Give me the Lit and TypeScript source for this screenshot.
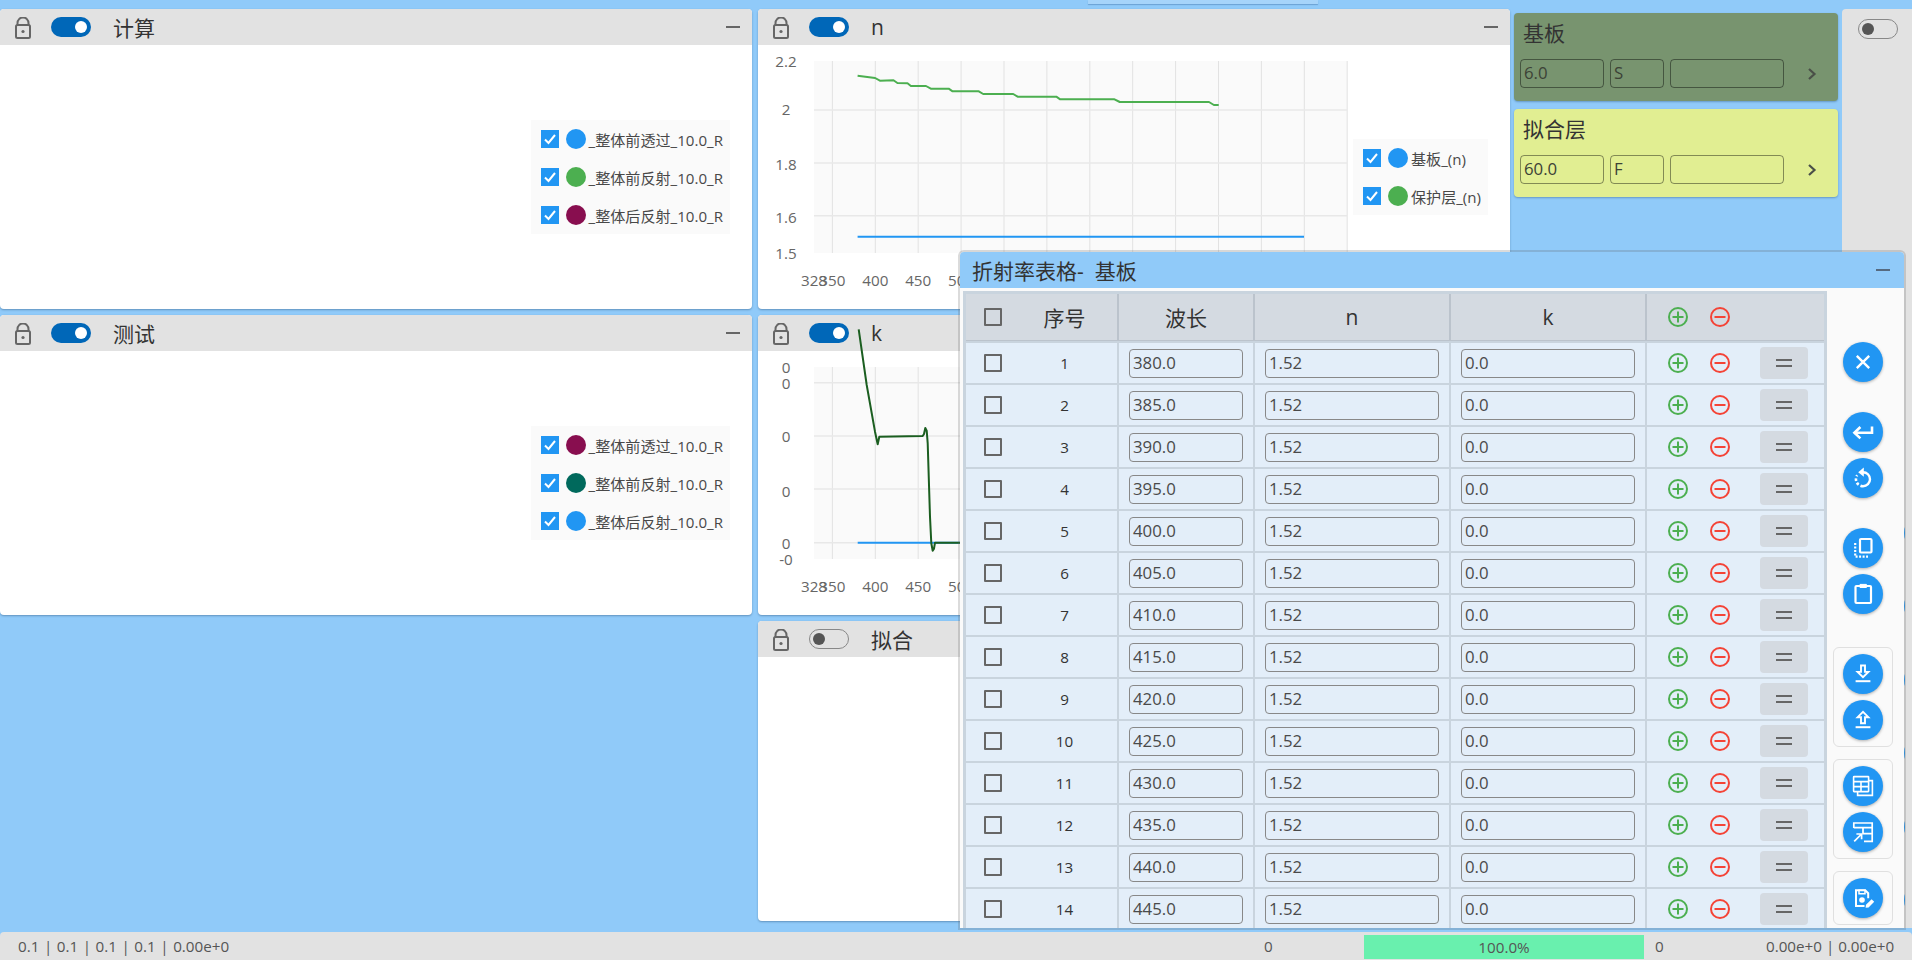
import { LitElement, html, css, svg } from "lit";
import { customElement } from "lit/decorators.js";

const BLUE = "#2196F3", GREEN = "#4CAF50", PLUM = "#880E4F", TEAL = "#00695C", DARKGREEN = "#1B5E20";

const GRID_X = Array.from({ length: 13 }, (_, i) => 74.4 + 42.9 * i);

const N_GREEN: [number, number][] = [
  [222, 227], [258, 234], [268, 242], [296, 241], [304, 249], [325, 250], [332, 258], [363, 258],
  [373, 266], [410, 266], [418, 274], [472, 274], [481, 282], [543, 282], [552, 290], [632, 290],
  [640, 298], [752, 298], [763, 306], [947, 306], [957, 315], [967, 315],
];
const K_GREEN: [number, number][] = [
  [326, 58], [350, 225], [375, 365], [383, 403], [388, 380], [518, 378], [522, 372], [526, 354], [530, 362],
  [533, 400], [540, 620], [544, 700], [548, 722], [552, 716], [555, 698], [1800, 698],
];

function lock() {
  return html`<svg class="lock" viewBox="0 0 18 22" width="18" height="22">
    <path d="M3.5 8V6a5.5 5.5 0 0 1 11 0v2" fill="none" stroke="#666" stroke-width="2"/>
    <rect x="2" y="8" width="14" height="13" rx="1.5" fill="none" stroke="#666" stroke-width="2"/>
    <circle cx="9" cy="14.5" r="1.6" fill="#666"/>
  </svg>`;
}

function chart(
  hs: number[],
  yLabels: [string, number][],
  lines: { pts: [number, number][]; color: string }[],
) {
  const xLabels: [string, number][] = [["328", 56], ["350", 74.4], ["400", 117.3], ["450", 160.2], ["500", 203.1]];
  return html`<svg class="chart" width="752" height="264" viewBox="0 0 752 264">
    <rect x="56" y="16" width="533" height="192" fill="#FAFAFA"/>
    ${GRID_X.map((x) => svg`<line x1=${x} x2=${x} y1="16" y2="208" stroke="#E2E2E2"/>`)}
    ${hs.map((y) => svg`<line x1="56" x2="589" y1=${y} y2=${y} stroke="#E8E8E8" stroke-width="1.4"/>`)}
    ${yLabels.map(([t, y]) => svg`<text class="tick" x="28" y=${y} text-anchor="middle" dominant-baseline="central">${t}</text>`)}
    ${xLabels.map(([t, x]) => svg`<text class="tick" x=${x} y="235" text-anchor="middle" dominant-baseline="central">${t}</text>`)}
    ${lines.map((l) => svg`<polyline points=${l.pts.map((p) => p.join(",")).join(" ")} fill="none" stroke=${l.color} stroke-width="2" stroke-linejoin="round"/>`)}
  </svg>`;
}

function legend(items: [string, string][]) {
  return html`<div class="legend">
    ${items.map(([color, label]) => html`<div class="leg-row">
      <svg class="check" viewBox="0 0 18 18" width="18" height="18"><rect width="18" height="18" fill="#2196F3"/><path d="M4 9.5l3.5 3.5 6.5-8" fill="none" stroke="#fff" stroke-width="2"/></svg>
      <span class="dot" style="background:${color}"></span>
      <span class="leg-text">${label}</span>
    </div>`)}
  </div>`;
}

function card(title: string, on: boolean, body: unknown) {
  return html`<section class="card">
    <header class="card-head">
      ${lock()}
      <span class="toggle ${on ? "on" : "off"}"><i></i></span>
      <span class="card-title">${title}</span>
      <span class="dash"></span>
    </header>
    <div class="card-body">${body}</div>
  </section>`;
}

function layer(name: string, cls: string, a: string, b: string) {
  return html`<div class="layer ${cls}">
    <div class="layer-name">${name}</div>
    <div class="layer-row">
      <div class="lf w84">${a}</div>
      <div class="lf w54">${b}</div>
      <div class="lf w114"></div>
      <svg class="chev" viewBox="0 0 10 14" width="10" height="14"><path d="M2 2l5.5 5L2 12" fill="none" stroke="#4a4f48" stroke-width="2.2"/></svg>
    </div>
  </div>`;
}

const plusIcon = html`<svg viewBox="0 0 20 20" width="20" height="20"><circle cx="10" cy="10" r="9" fill="none" stroke="#4CAF50" stroke-width="2"/><path d="M10 4.5v11M4.5 10h11" stroke="#4CAF50" stroke-width="2"/></svg>`;
const minusIcon = html`<svg viewBox="0 0 20 20" width="20" height="20"><circle cx="10" cy="10" r="9" fill="none" stroke="#F44336" stroke-width="2"/><path d="M4.5 10h11" stroke="#F44336" stroke-width="2"/></svg>`;

const ICONS: Record<string, unknown> = {
  close: svg`<path d="M5.8 5.8l12.4 12.4M18.2 5.8L5.8 18.2" stroke-width="2.4"/>`,
  enter: svg`<path d="M21 6.5v6.3H4" stroke-width="2.6"/><path d="M9.4 7L3.4 12.8 9.4 18.4" stroke-width="2.6"/>`,
  undo: svg`<path d="M12 6.2A7 7 0 1 1 12 20.2" stroke-width="2.4"/><path d="M12 20.2A7 7 0 0 1 6.2 9.2" stroke-width="2.6" stroke-dasharray="2.6 2"/><path d="M12.8 1.4L7.2 6.2l5.6 4.6z" fill="#fff" stroke="none"/>`,
  copy: svg`<rect x="9" y="3" width="11.5" height="13.5" rx="1" stroke-width="2.2"/><path d="M4.2 7v13.6H17" stroke-width="2.2" stroke-dasharray="2 1.5"/>`,
  paste: svg`<rect x="4.5" y="4" width="15.5" height="17" rx="1" stroke-width="2.2"/><path d="M9 5.5V2.4h6.4v3.1z" fill="#fff" stroke="#fff" stroke-width="1"/>`,
  down: svg`<path d="M10 3.5h4v6.4h3.4L12 15.2 6.6 9.9H10z" stroke-width="1.9"/><path d="M4.6 19.2h14.8" stroke-width="2"/>`,
  up: svg`<path d="M10 15.2V9.2H6.6L12 3.8l5.4 5.4H14v6z" stroke-width="1.9"/><path d="M4.6 19.2h14.8" stroke-width="2"/>`,
  table: svg`<g stroke-width="1.6"><rect x="2.6" y="2.6" width="15" height="15" rx=".5"/><path d="M2.6 7.6h15M2.6 12.6h15M10 7.6v10M17.6 6.6h3.8v14.8H6.6v-3.8"/></g>`,
  texport: svg`<g stroke-width="1.7"><path d="M2.8 8V3h18.4v18.4h-8.2M2.8 7.6h18.4M12 7.6v6h9.2"/><path d="M3.2 21.4l7.4-7.4M5.4 14h5.2v5.2"/></g>`,
  saveedit: svg`<path d="M13.5 20H5V4.2h9.2l3 3v5" stroke-width="2"/><path d="M8 4.2h6v3.6H8z" fill="none" stroke-width="1.5"/><circle cx="11" cy="14" r="2.8" fill="#fff" stroke="none"/><path d="M14.6 21.8l.4-3 5.6-5.6 2.6 2.6-5.6 5.6z" fill="#fff" stroke="none"/>`,
};

function fab(name: string) {
  return html`<button class="fab"><svg viewBox="0 0 24 24" width="24" height="24" fill="none" stroke="#fff">${ICONS[name]}</svg></button>`;
}

const ROWS = Array.from({ length: 14 }, (_, i) => ({ no: i + 1, wl: (380 + i * 5).toFixed(1) }));

@customElement("app-root")
export class AppRoot extends LitElement {
  static styles = css`
    :host {
      display: block;
      position: relative;
      width: 1912px;
      height: 960px;
      overflow: hidden;
      background: #90caf9;
      font-family: "Open Sans", "Noto Sans CJK SC", sans-serif;
      color: #444;
    }
    .tab {
      position: absolute;
      left: 1088px;
      top: 0;
      width: 230px;
      height: 4px;
      background: #a6d4fa;
      box-shadow: 0 1px 1px rgba(40, 90, 140, 0.35);
    }
    .main {
      display: flex;
      height: 932px;
      padding: 9px 0 4px;
      box-sizing: border-box;
    }
    .col {
      width: 752px;
      display: flex;
      flex-direction: column;
      gap: 6px;
      margin-right: 6px;
      flex: none;
    }
    .card {
      height: 300px;
      flex: none;
      display: flex;
      flex-direction: column;
      background: #fff;
      border-radius: 4px;
      box-shadow: 0 1px 2px rgba(40, 80, 120, 0.45);
    }
    .card-head {
      height: 36px;
      flex: none;
      display: flex;
      align-items: center;
      background: #e2e2e2;
      border-radius: 4px 4px 0 0;
      padding-left: 14px;
      padding-right: 12px;
    }
    .lock { margin-top: 1px; flex: none; }
    .toggle {
      width: 40px;
      height: 20px;
      margin-left: 19px;
      border-radius: 10px;
      box-sizing: border-box;
      display: flex;
      align-items: center;
      flex: none;
    }
    .toggle.on { background: #0067b8; justify-content: flex-end; padding-right: 4px; }
    .toggle.on i { width: 12px; height: 12px; border-radius: 50%; background: #fff; }
    .toggle.off { border: 1px solid #888; padding-left: 3px; }
    .toggle.off i { width: 12px; height: 12px; border-radius: 50%; background: #555; }
    .card-title {
      margin-left: 22px;
      font-size: 21px;
      color: #333;
      flex: 1;
    }
    .dash { width: 14px; height: 2px; background: #666; flex: none; }
    .card-body {
      position: relative;
      flex: 1;
      display: flex;
      align-items: center;
      justify-content: flex-end;
      padding-right: 22px;
    }
    .chart { position: absolute; left: 0; top: 0; overflow: visible; }
    .tick { font-size: 15.2px; fill: #666; }
    .legend {
      position: relative;
      background: #fafafa;
      padding: 0 7px 0 10px;
      display: flex;
      flex-direction: column;
    }
    .leg-row { height: 38px; display: flex; align-items: center; }
    .check { flex: none; }
    .dot { width: 20px; height: 20px; border-radius: 50%; margin-left: 7px; margin-right: 3px; flex: none; }
    .leg-text { font-size: 15.1px; color: #484848; white-space: nowrap; }
    .layers {
      width: 324px;
      margin-left: -2px;
      padding-top: 4px;
      display: flex;
      flex-direction: column;
      gap: 8px;
      flex: none;
    }
    .layer {
      height: 88px;
      border-radius: 4px;
      box-sizing: border-box;
      padding: 0 6px;
      box-shadow: 0 1px 2px rgba(40, 80, 120, 0.4);
      color: #333;
    }
    .layer.s { background: #78946f; }
    .layer.f { background: #e1ee92; }
    .layer-name { height: 46px; line-height: 40px; padding-left: 3px; font-size: 21px; }
    .layer-row { display: flex; gap: 6px; align-items: center; }
    .lf {
      height: 29px;
      box-sizing: border-box;
      border: 1px solid rgba(0, 0, 0, 0.42);
      border-radius: 4px;
      font-size: 16.8px;
      line-height: 26px;
      padding-left: 3px;
      color: #3c4236;
    }
    .w84 { width: 84px; }
    .w54 { width: 54px; }
    .w114 { width: 114px; }
    .chev { margin-left: 17px; }
    .right {
      width: 70px;
      margin-left: 4px;
      flex: none;
      background: #e2e2e2;
      border-radius: 4px 0 0 0;
      box-sizing: border-box;
      padding: 10px 0 0 16px;
    }
    .right .toggle { margin-left: 0; }
    .peek { display: flex; flex-direction: column; gap: 33.4px; margin-top: 474px; margin-left: 7px; }
    .peek span { width: 40px; height: 40px; border-radius: 50%; background: #2196f3; display: block; }
    .status {
      position: relative;
      height: 28px;
      background: #e2e2e2;
      border-radius: 4px 4px 0 0;
      display: flex;
      align-items: center;
      font-size: 15.2px;
      color: #555;
      padding-left: 18px;
    }
    .st-left { width: 1246px; word-spacing: 0.6px; }
    .st-mid { width: 100px; }
    .st-bar {
      width: 280px;
      height: 24px;
      margin-top: 2px;
      background: #69f0ae;
      text-align: center;
      line-height: 24px;
    }
    .st-zero { width: 122px; padding-left: 11px; box-sizing: border-box; }
    .dialog {
      position: absolute;
      left: 960px;
      top: 252px;
      width: 944px;
      height: 676px;
      background: #fafafa;
      border-radius: 4px 4px 0 0;
      box-shadow: 0 0 0 2px rgba(90, 90, 90, 0.22);
      display: flex;
      flex-direction: column;
      overflow: hidden;
    }
    .d-head {
      height: 36px;
      flex: none;
      background: #90caf9;
      display: flex;
      align-items: center;
      padding: 0 14px 0 12px;
    }
    .d-title { flex: 1; font-size: 21px; color: #333; white-space: pre; }
    .d-head .dash { background: #566a80; }
    .d-body { display: flex; flex: 1; min-height: 0; padding: 3px 0 0 3px; }
    .table {
      width: 864px;
      box-sizing: border-box;
      padding: 3px;
      background: #c9d4de;
      display: flex;
      flex-direction: column;
      gap: 2px;
      flex: none;
      height: 700px;
    }
    .r {
      display: grid;
      grid-template-columns: 151px 134px 194px 194px 177px;
      column-gap: 2px;
      flex: none;
    }
    .r.h { height: 47px; padding-bottom: 1px; box-sizing: border-box; background: #bbc3cc; }
    .r.h > div { background: #d4dae1; font-size: 21px; color: #333; }
    .r.b { height: 40px; }
    .r.b > div { background: #e3eef9; }
    .c { display: flex; align-items: center; justify-content: center; padding: 0 10px; min-width: 0; }
    .r > .c-no { justify-content: flex-start; padding-left: 18px; padding-right: 0; }
    .box { width: 18px; height: 18px; box-sizing: border-box; border: 2px solid #666; border-radius: 1px; flex: none; }
    .num { width: 105px; margin-left: 10px; text-align: center; font-size: 15.2px; font-weight: 500; color: #333; }
    .h .num { font-size: 21px; font-weight: 400; }
    .field {
      width: 100%;
      height: 29px;
      box-sizing: border-box;
      border: 1px solid #888;
      border-radius: 4px;
      font-size: 16.8px;
      line-height: 26px;
      padding-left: 3px;
      color: #4a4a4a;
    }
    .r > .c-act { justify-content: flex-start; padding-left: 21px; padding-right: 0; }
    .c-act svg { flex: none; display: block; }
    .c-act svg + svg { margin-left: 22px; }
    .handle {
      width: 48px;
      height: 32px;
      margin-left: 30px;
      background: #d4dae1;
      border-radius: 4px;
      display: flex;
      flex-direction: column;
      align-items: center;
      justify-content: center;
      gap: 4px;
    }
    .handle i { display: block; width: 16px; height: 2px; background: #666; }
    .side {
      flex: 1;
      display: flex;
      flex-direction: column;
      align-items: center;
      padding-top: 51px;
      padding-right: 5px;
    }
    .fab {
      width: 40px;
      height: 40px;
      padding: 0;
      border: 0;
      border-radius: 50%;
      background: #2196f3;
      box-shadow: 0 1px 3px rgba(0, 0, 0, 0.3);
      display: flex;
      align-items: center;
      justify-content: center;
      flex: none;
    }
    .stack { display: flex; flex-direction: column; gap: 6px; }
    .mt30 { margin-top: 30px; }
    .group {
      width: 60px;
      box-sizing: border-box;
      border: 1px solid #e0e0e0;
      border-radius: 6px;
      padding: 6px 0;
      display: flex;
      flex-direction: column;
      align-items: center;
      gap: 6px;
      margin-top: 12px;
    }
    .group.first { margin-top: 33px; }
  `;

  render() {
    const nLines = [
      { pts: [[99.6, 191.7], [546, 191.7]] as [number, number][], color: BLUE },
      { pts: N_GREEN.map(([x, y]) => [+(x / 2.063 - 8).toFixed(1), +(y / 3 - 45).toFixed(1)] as [number, number]), color: GREEN },
    ];
    const kLines = [
      { pts: [[99.7, 191.7], [546, 191.7]] as [number, number][], color: BLUE },
      { pts: K_GREEN.map(([x, y]) => [+(x / 3 - 8).toFixed(1), +(y / 3 - 41).toFixed(1)] as [number, number]), color: DARKGREEN },
    ];
    return html`
      <div class="main">
        <div class="col">
          ${card("计算", true, legend([[BLUE, "_整体前透过_10.0_R"], [GREEN, "_整体前反射_10.0_R"], [PLUM, "_整体后反射_10.0_R"]]))}
          ${card("测试", true, legend([[PLUM, "_整体前透过_10.0_R"], [TEAL, "_整体前反射_10.0_R"], [BLUE, "_整体后反射_10.0_R"]]))}
        </div>
        <div class="col">
          ${card("n", true, html`${chart([65, 118, 170.7], [["2.2", 16], ["2", 64], ["1.8", 118.5], ["1.6", 171.5], ["1.5", 208]], nLines)}${legend([[BLUE, "基板_(n)"], [GREEN, "保护层_(n)"]])}`)}
          ${card("k", true, chart([31.7, 85, 138, 191.7], [["0", 15.7], ["0", 32], ["0", 85], ["0", 139.5], ["0", 192], ["-0", 208]], kLines))}
          ${card("拟合", false, "")}
        </div>
        <div class="layers">
          ${layer("基板", "s", "6.0", "S")}
          ${layer("拟合层", "f", "60.0", "F")}
        </div>
        <aside class="right">
          <span class="toggle off"><i></i></span>
          <div class="peek">${[0, 1, 2, 3, 4, 5].map(() => html`<span></span>`)}</div>
        </aside>
      </div>
      <footer class="status">
        <span class="st-left">0.1 | 0.1 | 0.1 | 0.1 | 0.00e+0</span>
        <span class="st-mid">0</span>
        <span class="st-bar">100.0%</span>
        <span class="st-zero">0</span>
        <span>0.00e+0 | 0.00e+0</span>
      </footer>
      <div class="tab"></div>
      <div class="dialog">
        <div class="d-head">
          <span class="d-title">折射率表格-  基板</span>
          <span class="dash"></span>
        </div>
        <div class="d-body">
          <div class="table">
            <div class="r h">
              <div class="c c-no"><span class="box"></span><span class="num">序号</span></div>
              <div class="c">波长</div>
              <div class="c">n</div>
              <div class="c">k</div>
              <div class="c c-act">${plusIcon}${minusIcon}</div>
            </div>
            ${ROWS.map((r) => html`<div class="r b">
              <div class="c c-no"><span class="box"></span><span class="num">${r.no}</span></div>
              <div class="c"><div class="field">${r.wl}</div></div>
              <div class="c"><div class="field">1.52</div></div>
              <div class="c"><div class="field">0.0</div></div>
              <div class="c c-act">${plusIcon}${minusIcon}<span class="handle"><i></i><i></i></span></div>
            </div>`)}
          </div>
          <div class="side">
            ${fab("close")}
            <div class="stack mt30">${fab("enter")}${fab("undo")}</div>
            <div class="stack mt30">${fab("copy")}${fab("paste")}</div>
            <div class="group first">${fab("down")}${fab("up")}</div>
            <div class="group">${fab("table")}${fab("texport")}</div>
            <div class="group">${fab("saveedit")}</div>
          </div>
        </div>
      </div>
    `;
  }
}
